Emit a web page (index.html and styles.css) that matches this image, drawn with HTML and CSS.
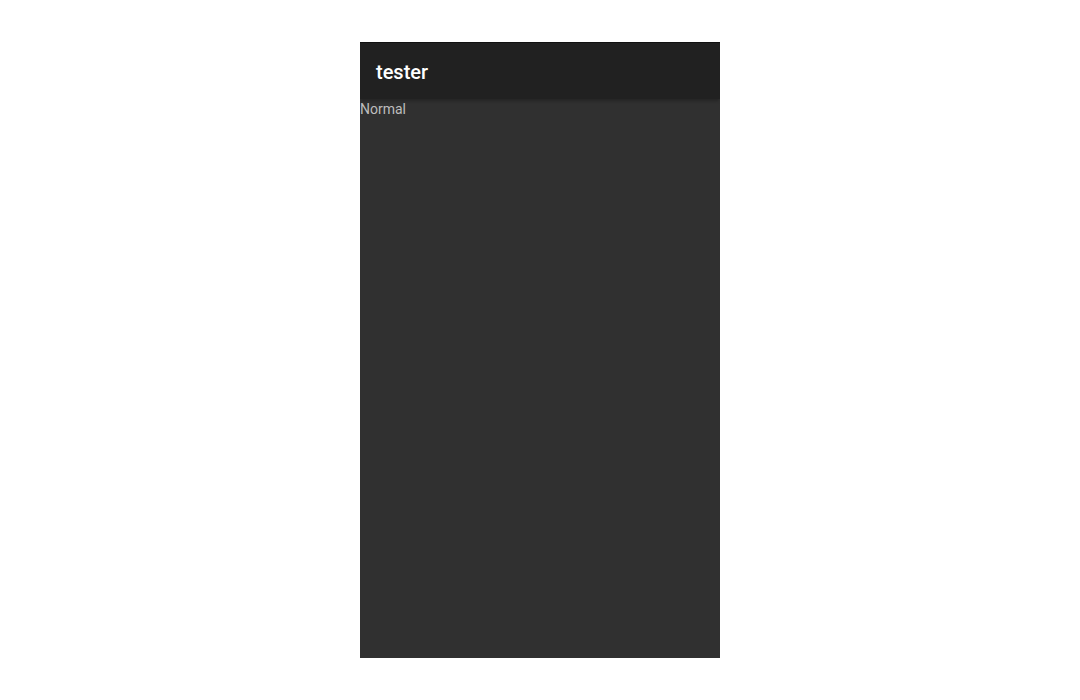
FILE: index.html
```html
<!DOCTYPE html>
<html>
<head>
<meta charset="utf-8">
<link rel="stylesheet" href="styles.css">
</head>
<body>
<div class="stage">
  <div class="phone">
    <header class="appbar"><h1 class="title">tester</h1></header>
    <main class="content"><div class="label">Normal</div></main>
  </div>
</div>
</body>
</html>
```
FILE: styles.css
```css
html, body { margin: 0; padding: 0; background: #ffffff; }
.stage { display: flex; justify-content: center; padding-top: 42px; }
.phone { width: 360px; height: 616px; background: #303030; display: flex; flex-direction: column; font-family: Roboto, "Noto Sans", sans-serif; overflow: hidden; }
.appbar { height: 57px; flex: none; background: #212121; border-top: 1px solid #111; box-sizing: border-box; display: flex; align-items: center; padding-left: 16px; padding-top: 1px; box-shadow: 0 3px 3px -1px rgba(0,0,0,0.25); position: relative; z-index: 1; }
.title { margin: 0; font-size: 20px; font-weight: 500; color: #ffffff; }
.content { flex: 1; }
.label { font-size: 14px; color: #bdbdbd; line-height: 20px; }
```
